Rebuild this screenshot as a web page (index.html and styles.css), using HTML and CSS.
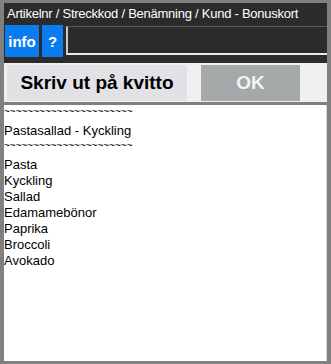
FILE: index.html
```html
<!DOCTYPE html>
<html lang="sv">
<head>
  <meta charset="UTF-8">
  <title>Kassa</title>
  <link rel="stylesheet" href="styles.css">
</head>
<body>

<div class="frame">

  <!-- sok-falt -->
  <div class="header">
    <div class="title">Artikelnr / Streckkod / Benämning / Kund - Bonuskort</div>
    <div class="search-row">
      <button class="blue-btn info">info</button>
      <button class="blue-btn help">?</button>
      <input type="text" class="search" id="search">
    </div>
  </div>

  <div class="actions">
    <button class="print">Skriv ut på kvitto</button>
    <button class="ok">OK</button>
  </div>

  <div class="receipt">
    <div class="tilde">~~~~~~~~~~~~~~~~~~~~~~</div>
    <div class="name">Pastasallad - Kyckling</div>
    <div class="tilde">~~~~~~~~~~~~~~~~~~~~~~</div>
    <div class="items">
      <div>Pasta</div>
      <div>Kyckling</div>
      <div>Sallad</div>
      <div>Edamamebönor</div>
      <div>Paprika</div>
      <div>Broccoli</div>
      <div>Avokado</div>
    </div>
  </div>

</div>

</body>
</html>
```

FILE: styles.css
```css
html, body {
  margin: 0;
  height: 100%;
}
body {
  background: #808080;
  font-family: "Liberation Sans", Arial, sans-serif;
}
.frame {
  box-sizing: border-box;
  height: 364px;
  padding: 3px 4px 3px 4px;
  display: flex;
  flex-direction: column;
}
.header {
  background: #2b2b2b;
  height: 60px;
  box-sizing: border-box;
}
.title {
  color: #ffffff;
  font-size: 13px;
  letter-spacing: -0.25px;
  height: 22px;
  line-height: 22px;
  padding-left: 3px;
  white-space: nowrap;
  overflow: hidden;
}
.search-row {
  display: flex;
  height: 32px;
  padding-left: 1px;
}
.blue-btn {
  background: #0b7cf0;
  color: white;
  border: none;
  font-family: inherit;
  font-weight: bold;
  font-size: 15px;
  padding: 0;
  height: 32px;
}
.info {
  width: 34px;
}
.help {
  width: 21px;
  margin-left: 3px;
}
.search {
  flex: 1;
  margin: 1px 0 0 3px;
  height: 29px;
  box-sizing: border-box;
  background: #2b2b2b;
  border: none;
  border-top: 1px solid #5a5a5a;
  border-left: 2px solid #c8c8c8;
  border-bottom: 2px solid #e8e8e8;
  outline: none;
}
.actions {
  background: #f0f0f0;
  height: 39px;
  display: flex;
  padding: 2px 0 0 3px;
  box-sizing: border-box;
}
.actions button {
  border: none;
  font-family: inherit;
  font-weight: bold;
  font-size: 19px;
  height: 36px;
  padding: 0;
}
.print {
  width: 180px;
  background: #e1e1e6;
  color: #000;
}
.ok {
  width: 99px;
  margin-left: 14px;
  background: #a5a9a9;
  color: #f4f4f4;
}
.receipt {
  flex: 1;
  margin-top: 3px;
  background: #ffffff;
  border-right: 1px solid #d8d8d8;
  font-size: 13px;
  color: #000;
  line-height: 16px;
}
.tilde {
  font-size: 10px;
  line-height: 10px;
  height: 10px;
  overflow: hidden;
  padding-top: 2px;
}
.name {
  padding-top: 6px;
  line-height: 16px;
}
.items {
  margin-top: 6px;
}
```
